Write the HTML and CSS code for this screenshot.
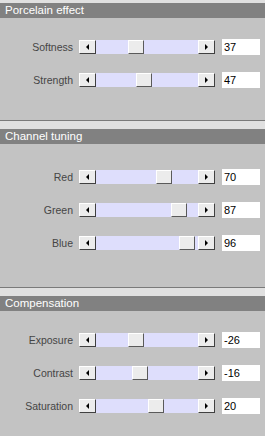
FILE: index.html
```html
<!DOCTYPE html>
<html lang="en">
  <head>
    <meta charset="UTF-8" />
    <title>Porcelain</title>
    <link rel="stylesheet" href="styles.css">
  </head>
  <body>
    <div class="panel">
      <div class="section first">
        <div class="title">Porcelain effect</div>
        <div class="rows">
          <div class="row">
            <span class="label">Softness</span>
            <div class="slider"><span class="btn left"></span><div class="track"><span class="thumb" style="left: 32px"></span></div><span class="btn right"></span></div>
            <div class="value">37</div>
          </div>
          <div class="row">
            <span class="label">Strength</span>
            <div class="slider"><span class="btn left"></span><div class="track"><span class="thumb" style="left: 40px"></span></div><span class="btn right"></span></div>
            <div class="value">47</div>
          </div>
        </div>
      </div>

      <div class="section channels">
        <div class="title">Channel tuning</div>
        <div class="rows">
          <div class="row">
            <span class="label">Red</span>
            <div class="slider"><span class="btn left"></span><div class="track"><span class="thumb" style="left: 60px"></span></div><span class="btn right"></span></div>
            <div class="value">70</div>
          </div>
          <div class="row">
            <span class="label">Green</span>
            <div class="slider"><span class="btn left"></span><div class="track"><span class="thumb" style="left: 75px"></span></div><span class="btn right"></span></div>
            <div class="value">87</div>
          </div>
          <div class="row">
            <span class="label">Blue</span>
            <div class="slider"><span class="btn left"></span><div class="track"><span class="thumb" style="left: 83px"></span></div><span class="btn right"></span></div>
            <div class="value">96</div>
          </div>
        </div>
      </div>

      <div class="section">
        <div class="title">Compensation</div>
        <div class="rows">
          <div class="row">
            <span class="label">Exposure</span>
            <div class="slider"><span class="btn left"></span><div class="track"><span class="thumb" style="left: 32px"></span></div><span class="btn right"></span></div>
            <div class="value">-26</div>
          </div>
          <div class="row">
            <span class="label">Contrast</span>
            <div class="slider"><span class="btn left"></span><div class="track"><span class="thumb" style="left: 36px"></span></div><span class="btn right"></span></div>
            <div class="value">-16</div>
          </div>
          <div class="row">
            <span class="label">Saturation</span>
            <div class="slider"><span class="btn left"></span><div class="track"><span class="thumb" style="left: 52px"></span></div><span class="btn right"></span></div>
            <div class="value">20</div>
          </div>
        </div>
      </div>
    </div>
  </body>
</html>
```
FILE: styles.css
```css
body {
  margin: 0;
  background-color: #c3c3c3;
  font-family: "Liberation Sans", Arial, sans-serif;
}
.panel {
  width: 265px;
  height: 436px;
  overflow: hidden;
}
.section {
  border-top: 1px solid #7a7a7a;
  padding-top: 8px;
  background: linear-gradient(#e0e0e0, #e0e0e0) top / 100% 8px no-repeat, #c3c3c3;
}
.section.first {
  border-top: none;
  padding-top: 3px;
}
.title {
  height: 15px;
  line-height: 15px;
  background-color: #818181;
  color: #ffffff;
  font-size: 11.5px;
  padding-left: 5px;
}
.rows {
  display: flex;
  flex-direction: column;
  gap: 17px;
  padding: 21px 0 32px 0;
}
.channels .rows {
  padding: 25px 0 36px 0;
}
.row {
  display: flex;
  align-items: center;
  height: 16px;
}
.label {
  width: 73px;
  text-align: right;
  font-size: 10.5px;
  color: #454545;
  margin-right: 6px;
}
.slider {
  display: flex;
  height: 14px;
  width: 136px;
}
.btn {
  width: 15px;
  height: 12px;
  background-color: #ececec;
  border-top: 1px solid #ffffff;
  border-left: 1px solid #ffffff;
  border-right: 1px solid #404040;
  border-bottom: 1px solid #404040;
  position: relative;
}
.btn::after {
  content: "";
  position: absolute;
  top: 3px;
  left: 6px;
  border-top: 3px solid transparent;
  border-bottom: 3px solid transparent;
}
.btn.left::after {
  border-right: 3px solid #000000;
}
.btn.right::after {
  border-left: 3px solid #000000;
}
.track {
  flex: 1;
  background-color: #dedefc;
  position: relative;
}
.thumb {
  position: absolute;
  top: 0;
  width: 14px;
  height: 12px;
  background-color: #ececec;
  border-top: 1px solid #ffffff;
  border-left: 1px solid #ffffff;
  border-right: 1px solid #5a5a5a;
  border-bottom: 1px solid #5a5a5a;
}
.value {
  margin-left: 7px;
  width: 36px;
  height: 16px;
  line-height: 16px;
  background-color: #ffffff;
  padding-left: 2px;
  font-size: 11px;
  color: #000000;
}
```
